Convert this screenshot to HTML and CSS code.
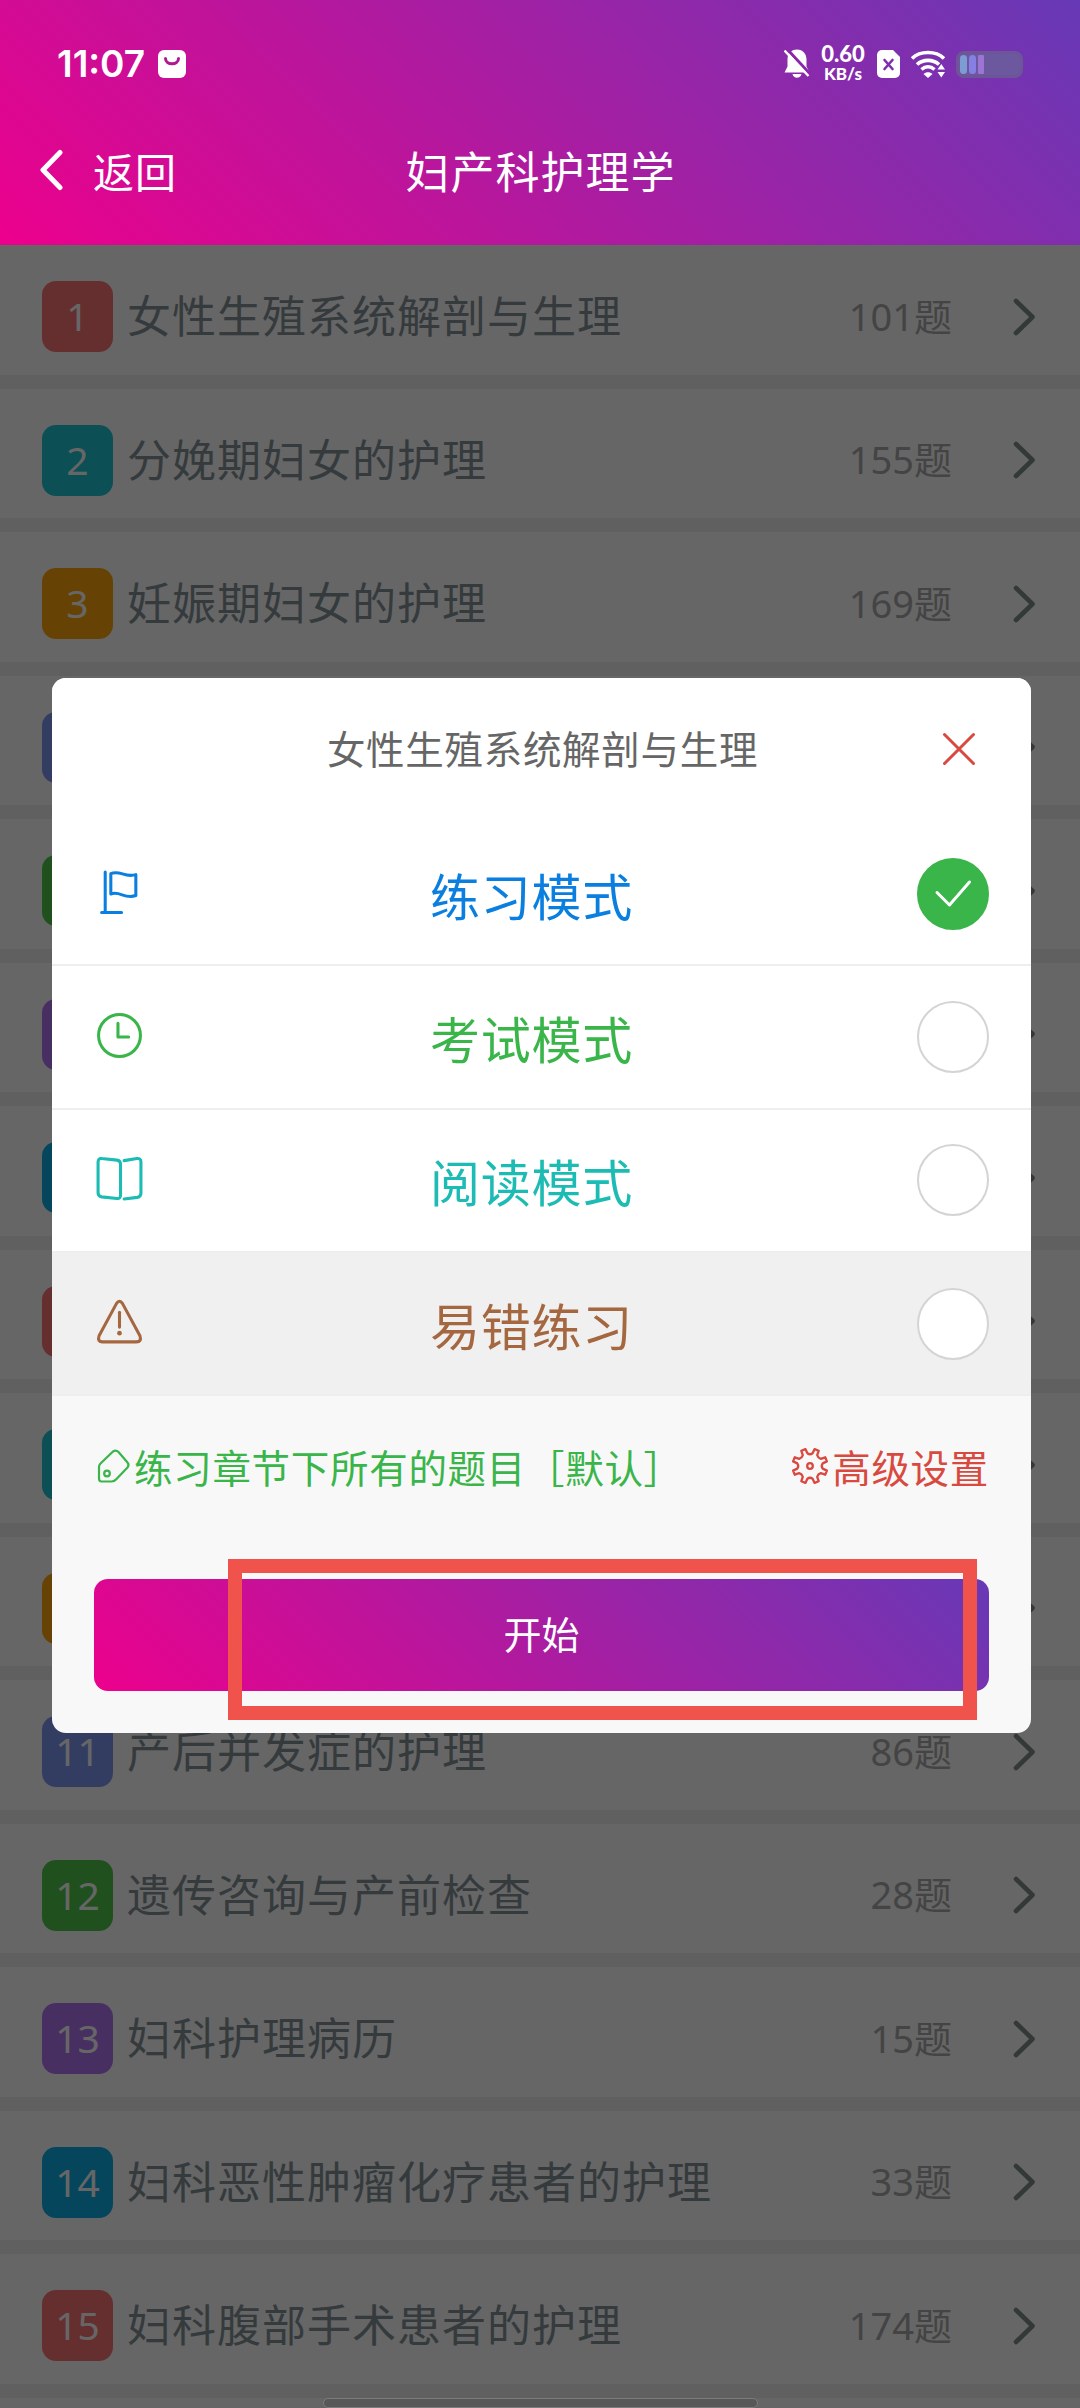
FILE: index.html
```html
<!DOCTYPE html>
<html lang="zh-CN">
<head>
<meta charset="utf-8">
<title>妇产科护理学</title>
<link rel="stylesheet" href="styles.css">
</head>
<body>
<svg class="sprite" aria-hidden="true">
  <symbol id="chevron" viewBox="0 0 26 40"><path d="M4 4 L20.500 20 L4 36" fill="none" stroke="currentColor" stroke-width="4.600" stroke-linecap="round" stroke-linejoin="round"/></symbol>
</svg>
<div class="screen">
  <header class="header">
    <div class="statusbar">
      <div class="status-left">
        <span class="clock">11:07</span>
        <svg width="28" height="28" viewBox="0 0 28 28"><rect width="28" height="28" rx="6" fill="#fff"/><path d="M7.500 8.500c0 7 13 7 13 0" fill="none" stroke="#b01a90" stroke-width="3" stroke-linecap="round"/></svg>
      </div>
      <div class="status-right">
        <svg class="bell" width="26" height="30" viewBox="0 0 26 30"><path d="M13 .5c6 0 9.500 4.500 9.500 10v7l3 6h-25l3-6v-7c0-5.500 3.500-10 9.500-10z" fill="#fff"/><path d="M8.500 25h9c-1 5-8 5-9 0z" fill="#fff"/><path d="M3 0 L26 25" stroke="#8b28aa" stroke-width="3"/><path d="M.5 1.500 L24.500 27" stroke="#fff" stroke-width="2.400"/></svg>
        <div class="speed"><span class="speed-num">0.60</span><span class="speed-unit">KB/s</span></div>
        <svg class="sim" width="23" height="28" viewBox="0 0 23 28"><path d="M5 0h11l7 7v16a5 5 0 0 1-5 5H5a5 5 0 0 1-5-5V5a5 5 0 0 1 5-5z" fill="#fff"/><path d="M7.500 10l8 9M15.500 10l-8 9" stroke="#7f2cae" stroke-width="2.600" stroke-linecap="round"/></svg>
        <svg class="wifi" width="34" height="28" viewBox="0 0 34 28"><g fill="none" stroke="#fff" stroke-width="3.600"><path d="M1 8.500C9 .5 25 .5 33 8.500"/><path d="M6 14.500c6-5.500 16-5.500 22 0"/><path d="M10.500 19.500c4-3.500 9-3.500 13 0"/></g><path d="M12.500 24c2.500-2.500 6.500-2.500 9 0l-4.500 4z" fill="#fff"/><path d="M26.500 19.500l3.800-5.500 3.700 5.500zM26.500 22l3.800 5.500 3.700-5.500z" fill="#fff"/></svg>
        <div class="battery"><i class="cell cell-a"></i><i class="cell cell-b"></i><i class="cell cell-c"></i></div>
      </div>
    </div>
    <nav class="navbar">
      <div class="back">
        <svg width="26" height="42" viewBox="0 0 26 42"><path d="M23 3.500 L6 21 L23 38.500" fill="none" stroke="#fff" stroke-width="5" stroke-linecap="round" stroke-linejoin="round"/></svg>
        <span>返回</span>
      </div>
      <h1 class="nav-title">妇产科护理学</h1>
      <span></span>
    </nav>
  </header>

  <main class="list">
    <div class="row"><span class="badge red">1</span><span class="name">女性生殖系统解剖与生理</span><span class="count">101题</span><svg class="chev"><use href="#chevron"/></svg></div>
    <div class="row"><span class="badge cyan">2</span><span class="name">分娩期妇女的护理</span><span class="count">155题</span><svg class="chev"><use href="#chevron"/></svg></div>
    <div class="row"><span class="badge amber">3</span><span class="name">妊娠期妇女的护理</span><span class="count">169题</span><svg class="chev"><use href="#chevron"/></svg></div>
    <div class="row"><span class="badge indigo"></span><span class="name"></span><svg class="chev"><use href="#chevron"/></svg></div>
    <div class="row"><span class="badge green"></span><span class="name"></span><svg class="chev"><use href="#chevron"/></svg></div>
    <div class="row"><span class="badge purple"></span><span class="name"></span><svg class="chev"><use href="#chevron"/></svg></div>
    <div class="row"><span class="badge blue"></span><span class="name"></span><svg class="chev"><use href="#chevron"/></svg></div>
    <div class="row"><span class="badge red"></span><span class="name"></span><svg class="chev"><use href="#chevron"/></svg></div>
    <div class="row"><span class="badge cyan"></span><span class="name"></span><svg class="chev"><use href="#chevron"/></svg></div>
    <div class="row"><span class="badge amber"></span><span class="name"></span><svg class="chev"><use href="#chevron"/></svg></div>
    <div class="row"><span class="badge indigo">11</span><span class="name">产后并发症的护理</span><span class="count">86题</span><svg class="chev"><use href="#chevron"/></svg></div>
    <div class="row"><span class="badge green">12</span><span class="name">遗传咨询与产前检查</span><span class="count">28题</span><svg class="chev"><use href="#chevron"/></svg></div>
    <div class="row"><span class="badge purple">13</span><span class="name">妇科护理病历</span><span class="count">15题</span><svg class="chev"><use href="#chevron"/></svg></div>
    <div class="row"><span class="badge blue">14</span><span class="name">妇科恶性肿瘤化疗患者的护理</span><span class="count">33题</span><svg class="chev"><use href="#chevron"/></svg></div>
    <div class="row"><span class="badge red">15</span><span class="name">妇科腹部手术患者的护理</span><span class="count">174题</span><svg class="chev"><use href="#chevron"/></svg></div>
  </main>

  <div class="overlay">
    <section class="modal">
      <div class="modal-head">
        <h2 class="modal-title">女性生殖系统解剖与生理</h2>
        <svg class="close" width="36" height="36" viewBox="0 0 36 36"><path d="M3.500 3.500l29 29M32.500 3.500l-29 29" stroke="#d9493f" stroke-width="3" stroke-linecap="round"/></svg>
      </div>
      <div class="option opt-blue">
        <svg class="opt-icon" viewBox="0 0 48 48" fill="none" stroke="currentColor" stroke-width="3" stroke-linecap="round" stroke-linejoin="round"><path d="M10 4v39M6.500 43.500h19.500M15.500 5.500c9-4 13.500 4.500 24.500 1v20.500c-11 4-15.500-5-24.500-1.500z"/></svg>
        <span class="opt-label">练习模式</span>
        <span class="radio checked"><svg width="40" height="30" viewBox="0 0 40 30"><path d="M4 13.500l12.500 12.500L36.500 3" fill="none" stroke="#fff" stroke-width="3" stroke-linecap="round" stroke-linejoin="round"/></svg></span>
      </div>
      <div class="option opt-green">
        <svg class="opt-icon" viewBox="0 0 48 48" fill="none" stroke="currentColor" stroke-width="3" stroke-linecap="round" stroke-linejoin="round"><circle cx="24" cy="24" r="20.500"/><path d="M22.500 12v13.500h10.500"/></svg>
        <span class="opt-label">考试模式</span>
        <span class="radio"></span>
      </div>
      <div class="option opt-teal">
        <svg class="opt-icon" viewBox="0 0 48 48" fill="none" stroke="currentColor" stroke-width="3" stroke-linecap="round" stroke-linejoin="round"><path d="M6.500 4.500l15 1.500q3.500.5 3.500 4v30.500q0 3.500-3.500 3l-15-1.500q-3.500-.5-3.500-4V8q0-4 3.500-3.500z"/><path d="M28.500 6.500l12.500-2q4-.5 4 3v31q0 3.500-3.500 4l-13 1.500"/></svg>
        <span class="opt-label">阅读模式</span>
        <span class="radio"></span>
      </div>
      <div class="option opt-brown">
        <svg class="opt-icon" viewBox="0 0 48 48" fill="none" stroke="currentColor" stroke-width="3" stroke-linecap="round" stroke-linejoin="round"><path d="M21 5.500q3-4.500 6 0l17 31.500q2 6-3.500 6h-33q-5.500 0-3.500-6z"/><path d="M24 14v14.500"/><circle cx="24" cy="34.500" r="2.300" fill="currentColor" stroke="none"/></svg>
        <span class="opt-label">易错练习</span>
        <span class="radio"></span>
      </div>
      <div class="settings">
        <span class="scope"><svg width="36" height="36" viewBox="0 0 36 36" fill="none" stroke="currentColor" stroke-width="2.200" stroke-linejoin="round"><path d="M4 19q0-2 1.500-3.500L18 3.500q3-2 5.500.5l9 10.500q2 2.500 0 5L21.500 31q-2 2.500-5 2.500H6.500Q4 33.500 4 30.500z"/><circle cx="12" cy="25.500" r="2.800"/></svg>练习章节下所有的题目［默认］</span>
        <span class="advanced"><svg width="38" height="38" viewBox="-19 -19 38 38" fill="none" stroke="currentColor" stroke-width="2.300" stroke-linejoin="round"><path d="M-2.600 -12.700Q0 -10.800 2.600 -12.700L4.600 -16.900L8.700 -15.200L7.200 -10.800Q8 -8 10.800 -7.200L15.200 -8.700L16.900 -4.600L12.700 -2.600Q10.800 0 12.700 2.600L16.900 4.600L15.200 8.700L10.800 7.200Q8 8 7.200 10.800L8.700 15.200L4.600 16.900L2.600 12.700Q0 10.800 -2.600 12.700L-4.600 16.900L-8.700 15.200L-7.200 10.800Q-8 8 -10.800 7.200L-15.200 8.700L-16.900 4.600L-12.700 2.600Q-10.800 0 -12.700 -2.600L-16.900 -4.600L-15.200 -8.700L-10.800 -7.200Q-8 -8 -7.200 -10.800L-8.700 -15.200L-4.600 -16.900Z"/><circle r="2.800"/></svg>高级设置</span>
      </div>
      <div class="modal-foot"><button class="start" type="button">开始</button></div>
      <div class="highlight"></div>
    </section>
  </div>
  <div class="home-indicator"></div>
</div>
</body>
</html>
```

FILE: styles.css
```css
* { box-sizing: border-box; }
body {
  margin: 0;
  font-family: "Noto Sans CJK SC", sans-serif;
}
.sprite { display: none; }
svg { flex: none; display: block; }
.screen {
  position: relative;
  width: 1080px;
  height: 2408px;
  overflow: hidden;
  background: #fff;
}

/* header */
.header {
  position: relative;
  z-index: 3;
  height: 245px;
  background: linear-gradient(45deg, #ec008c, #6739b6);
  color: #fff;
}
.statusbar {
  display: flex;
  justify-content: space-between;
  align-items: center;
  height: 128px;
  padding: 0 57px;
}
.status-left { display: flex; align-items: center; gap: 14px; }
.clock {
  width: 87px;
  font: 600 37px/40px Inter, sans-serif;
  white-space: nowrap;
}
.status-right { display: flex; align-items: center; }
.speed {
  display: flex;
  flex-direction: column;
  align-items: center;
  width: 46px;
  margin-left: 10px;
  font-family: Lato, sans-serif;
  font-weight: 900;
  white-space: nowrap;
}
.speed-num { font-size: 22px; line-height: 20px; }
.speed-unit { font-size: 17px; line-height: 20px; }
.sim { margin-left: 11px; }
.wifi { margin-left: 11px; }
.battery {
  display: flex;
  gap: 2px;
  width: 67px;
  height: 27px;
  margin-left: 11px;
  padding: 1px;
  border: 3px solid #6c5697;
  border-radius: 8px;
  background: #6c589f;
}
.cell { width: 7px; height: 19px; border-radius: 4px; }
.cell-a { background: #7c9cd3; }
.cell-b { background: #8580e2; }
.cell-c { width: 6px; border-radius: 1px; background: #9b74d4; }
.navbar {
  display: grid;
  grid-template-columns: 1fr auto 1fr;
  align-items: center;
  height: 84px;
  padding: 0 37px;
}
.back {
  display: flex;
  align-items: center;
  gap: 30px;
  font-size: 41px;
  letter-spacing: 1px;
}
.nav-title {
  margin: 0 -1px 0 0;
  font-size: 44px;
  font-weight: 400;
  letter-spacing: 1px;
}

/* chapter list */
.row {
  display: flex;
  align-items: center;
  height: 143.500px;
  padding: 14px 42px 0;
  border-bottom: 14px solid #f1f1f1;
}
.badge {
  flex: none;
  width: 71px;
  height: 71px;
  border-radius: 14px;
  color: #fff;
  font: 400 39px/70px "Noto Sans", sans-serif;
  text-align: center;
}
.red { background: #ff7675; }
.cyan { background: #20c5d2; }
.amber { background: #ffa80a; }
.indigo { background: #8098f5; }
.green { background: #52c84c; }
.purple { background: #b577f5; }
.blue { background: #0fafe5; }
.name {
  flex: 1;
  margin: -5px 0 0 14px;
  color: #86949a;
  font-size: 44px;
  line-height: 60px;
  letter-spacing: 1px;
  white-space: nowrap;
}
.count {
  margin: -2px 60px 0 0;
  color: #aaa;
  font: 400 38px/54px "Noto Sans", "Noto Sans CJK SC", sans-serif;
}
.chev { width: 26px; height: 40px; color: #7f8f8a; }

/* dialog */
.overlay {
  position: absolute;
  inset: 245px 0 0;
  z-index: 2;
  padding: 433px 49px 0 52px;
  background: rgba(0, 0, 0, .6);
}
.modal {
  position: relative;
  height: 1055px;
  overflow: hidden;
  border-radius: 14px;
  background: #f8f8f8;
}
.modal-head {
  display: flex;
  align-items: center;
  height: 145px;
  padding: 0 54px 4px 92px;
  background: #fff;
}
.modal-title {
  flex: 1;
  margin: -4px 0 0;
  color: #666;
  font-size: 38.500px;
  font-weight: 400;
  letter-spacing: .7px;
  text-align: center;
}
.option {
  display: flex;
  align-items: center;
  justify-content: space-between;
  height: 143.300px;
  padding: 0 42px 0 43px;
  border-bottom: 2px solid #eee;
  background: #fff;
}
.opt-icon { width: 49px; height: 49px; margin: 0 1px 3px 0; }
.opt-label {
  margin-right: -1px;
  font-size: 50px;
  line-height: 72px;
  letter-spacing: .7px;
}
.opt-blue { color: #0a7fe0; }
.opt-green { color: #39b54a; }
.opt-teal { color: #1cbbb4; }
.opt-brown { color: #a5673f; background: #f0f0f0; }
.radio {
  display: flex;
  align-items: center;
  justify-content: center;
  width: 72px;
  height: 72px;
  border: 2px solid #d4d4d4;
  border-radius: 50%;
  background: #fff;
}
.checked { border-color: #39b54a; background: #39b54a; }
.settings {
  display: flex;
  justify-content: space-between;
  align-items: center;
  height: 140px;
  padding: 0 42px 0 43px;
  font-size: 38.500px;
  letter-spacing: .7px;
  white-space: nowrap;
}
.scope, .advanced { display: flex; align-items: center; gap: 3px; }
.scope { color: #39b54a; }
.advanced { color: #d9493f; }
.modal-foot { padding: 43px 42px 0; }
.start {
  display: block;
  width: 895px;
  height: 112px;
  padding: 0 0 5px;
  border: 0;
  border-radius: 14px;
  background: linear-gradient(45deg, #ec008c, #6739b6);
  color: #fff;
  font-family: inherit;
  font-size: 38px;
}
.highlight {
  position: absolute;
  left: 176px;
  top: 881px;
  width: 749px;
  height: 161px;
  border: 14px solid #f0534c;
}
.home-indicator {
  position: absolute;
  z-index: 4;
  left: 323px;
  bottom: 0;
  width: 435px;
  height: 10px;
  border: 1px solid #7c7c7c;
  border-radius: 5px;
  background: #585858;
}
```
